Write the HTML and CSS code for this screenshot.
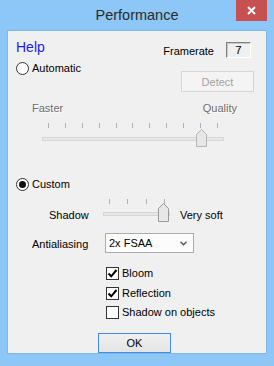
FILE: index.html
```html
<!DOCTYPE html>
<html>
<head>
<meta charset="utf-8">
<link rel="stylesheet" href="styles.css">
</head>
<body>
<div class="window">
  <div class="titlebar">
    <span></span>
    <span class="title">Performance</span>
    <div class="close"><svg width="9" height="9" viewBox="0 0 9 9"><path d="M1 1 L8 8 M8 1 L1 8" stroke="#fff" stroke-width="2"/></svg></div>
  </div>
  <div class="client">
    <div class="row-top">
      <span class="help">Help</span>
      <div class="framerate">
        <span class="fr-label">Framerate</span>
        <span class="fr-box">7</span>
      </div>
    </div>

    <div class="row-auto">
      <label class="radio"><span class="radio-circle"></span>Automatic</label>
      <button class="detect" disabled>Detect</button>
    </div>

    <div class="row-labels">
      <span>Faster</span>
      <span>Quality</span>
    </div>

    <div class="slider slider-main">
      <div class="ticks">
        <i></i><i></i><i></i><i></i><i></i><i></i><i></i><i></i><i></i><i></i><i></i>
      </div>
      <div class="track"></div>
      <svg class="thumb thumb-main" width="11" height="18" viewBox="0 0 11 18"><path d="M0.5 17.5 V5.5 L5.5 0.5 L10.5 5.5 V17.5 Z" fill="#e7e7e7" stroke="#b4b4b4"/></svg>
    </div>

    <label class="radio row-custom"><span class="radio-circle checked"></span>Custom</label>

    <div class="row-shadow">
      <span class="lbl-shadow">Shadow</span>
      <div class="slider slider-shadow">
        <div class="ticks"><i></i><i></i><i></i><i></i></div>
        <div class="track"></div>
        <svg class="thumb thumb-shadow" width="11" height="19" viewBox="0 0 11 19"><path d="M0.5 18.5 V5.5 L5.5 0.5 L10.5 5.5 V18.5 Z" fill="#e7e7e7" stroke="#9a9a9a"/></svg>
      </div>
      <span class="lbl-soft">Very soft</span>
    </div>

    <div class="row-aa">
      <span class="lbl-aa">Antialiasing</span>
      <div class="select">
        <span>2x FSAA</span>
        <svg width="7" height="5" viewBox="0 0 7 5"><path d="M0.5 0.8 L3.5 3.8 L6.5 0.8" fill="none" stroke="#555" stroke-width="1.4"/></svg>
      </div>
    </div>

    <div class="checks">
      <label class="check"><span class="box"><svg width="11" height="11" viewBox="0 0 11 11"><path d="M1.5 5.5 L4.2 8.3 L9.5 2" fill="none" stroke="#000" stroke-width="2"/></svg></span>Bloom</label>
      <label class="check"><span class="box"><svg width="11" height="11" viewBox="0 0 11 11"><path d="M1.5 5.5 L4.2 8.3 L9.5 2" fill="none" stroke="#000" stroke-width="2"/></svg></span>Reflection</label>
      <label class="check"><span class="box"></span>Shadow on objects</label>
    </div>

    <div class="row-ok">
      <button class="ok">OK</button>
    </div>
  </div>
</div>
</body>
</html>
```

FILE: styles.css
```css
html, body {
  margin: 0;
  padding: 0;
}
body {
  width: 274px;
  height: 366px;
  overflow: hidden;
  font-family: "Liberation Sans", Arial, sans-serif;
  font-size: 11px;
  color: #000;
}
.window {
  width: 274px;
  height: 366px;
  background: #8cc7f7;
  box-sizing: border-box;
  padding: 0 8px 12px 8px;
  display: flex;
  flex-direction: column;
}
.titlebar {
  height: 30px;
  display: grid;
  grid-template-columns: 1fr auto 1fr;
  margin: 0 -8px;
}
.title {
  font-size: 14.5px;
  color: #2b2b2b;
  line-height: 16px;
  padding-top: 7px;
}
.close {
  justify-self: end;
  width: 31px;
  height: 21px;
  margin-right: 7px;
  background: #c75050;
  display: flex;
  align-items: center;
  justify-content: center;
}
.client {
  flex: 1;
  background: #f0f0f0;
  border: 1px solid #7fb6e6;
  margin: 0 -1px;
  display: flex;
  flex-direction: column;
  line-height: 13px;
}
.row-top {
  display: flex;
  justify-content: space-between;
  margin-top: 8px;
  height: 19px;
  padding-left: 8px;
  padding-right: 15px;
}
.help {
  font-size: 14px;
  line-height: 16px;
  color: #1c1cf2;
}
.framerate {
  display: flex;
  align-items: flex-start;
}
.fr-label {
  margin-top: 6px;
  margin-right: 12px;
}
.fr-box {
  margin-top: 3px;
  width: 23px;
  height: 14px;
  border: 1px solid;
  border-color: #828282 #ffffff #ffffff #828282;
  box-shadow: inset 1px 1px 0 #c8c8c8;
  line-height: 14px;
  font-size: 11.5px;
  display: flex;
  justify-content: center;
}
.row-auto {
  margin-top: 4px;
  height: 30px;
  display: flex;
  justify-content: space-between;
  align-items: flex-start;
  padding-left: 8px;
  padding-right: 12px;
}
.radio {
  display: flex;
  align-items: center;
  height: 13px;
}
.radio-circle {
  width: 11px;
  height: 11px;
  border: 1px solid #333;
  border-radius: 50%;
  background: #fff;
  margin-right: 3px;
  box-sizing: content-box;
  display: flex;
  align-items: center;
  justify-content: center;
}
.radio-circle.checked::after {
  content: "";
  width: 7px;
  height: 7px;
  border-radius: 50%;
  background: #111;
}
.detect {
  margin-top: 9px;
  width: 73px;
  height: 21px;
  font-family: "Liberation Sans", Arial, sans-serif;
  font-size: 11px;
  color: #a3a3a3;
  background: #f4f4f4;
  border: 1px solid #d5d5d5;
  padding: 0;
}
.row-labels {
  margin-top: 10px;
  height: 13px;
  display: flex;
  justify-content: space-between;
  padding-left: 24px;
  padding-right: 29px;
  color: #6d6d6d;
  text-shadow: 1px 1px 0 #ffffff;
}
.slider {
  position: relative;
}
.ticks {
  display: flex;
  justify-content: space-between;
  height: 5px;
}
.ticks i {
  width: 1px;
  height: 5px;
  background: #b0b0b0;
}
.track {
  height: 2px;
  border: 1px solid #d6d6d6;
  background: #e7e7e7;
}
.thumb {
  position: absolute;
  display: block;
}
.slider-main {
  margin-top: 8px;
  margin-left: 34px;
  width: 182px;
  height: 24px;
}
.slider-main .ticks {
  margin: 0 6px;
}
.slider-main .track {
  margin-top: 9px;
}
.thumb-main {
  left: 154px;
  top: 6px;
}
.row-custom {
  margin-top: 31px;
  margin-left: 8px;
  align-self: flex-start;
}
.row-shadow {
  margin-top: 8px;
  height: 24px;
  display: flex;
  align-items: flex-start;
  padding-left: 41px;
}
.lbl-shadow {
  margin-top: 10px;
  width: 54px;
}
.slider-shadow {
  width: 67px;
  height: 24px;
}
.slider-shadow .ticks {
  margin: 0 5px 0 6px;
}
.slider-shadow .track {
  margin-top: 8px;
}
.thumb-shadow {
  left: 55px;
  top: 4px;
}
.lbl-soft {
  margin-top: 10px;
  margin-left: 10px;
}
.row-aa {
  margin-top: 10px;
  height: 20px;
  display: flex;
  align-items: center;
  padding-left: 24px;
}
.lbl-aa {
  width: 73px;
  margin-top: 2px;
}
.select {
  width: 89px;
  height: 20px;
  box-sizing: border-box;
  border: 1px solid #acacac;
  background: #fcfcfc;
  display: flex;
  align-items: center;
  justify-content: space-between;
  padding: 0 6px 0 3px;
}
.checks {
  margin-top: 14px;
  padding-left: 98px;
  display: flex;
  flex-direction: column;
  gap: 6.5px;
}
.check {
  display: flex;
  align-items: center;
  height: 13px;
}
.box {
  width: 11px;
  height: 11px;
  border: 1px solid #333;
  background: #fff;
  margin-right: 3px;
  display: flex;
  align-items: center;
  justify-content: center;
}
.box svg {
  display: block;
}
.row-ok {
  margin-top: 14px;
  padding-left: 90px;
}
.ok {
  width: 73px;
  height: 20px;
  box-sizing: border-box;
  border: 1px solid #3d8ee6;
  background: linear-gradient(#f0f0f0, #e4e4e4);
  font-family: "Liberation Sans", Arial, sans-serif;
  font-size: 11px;
  color: #000;
  padding: 0;
}
```
